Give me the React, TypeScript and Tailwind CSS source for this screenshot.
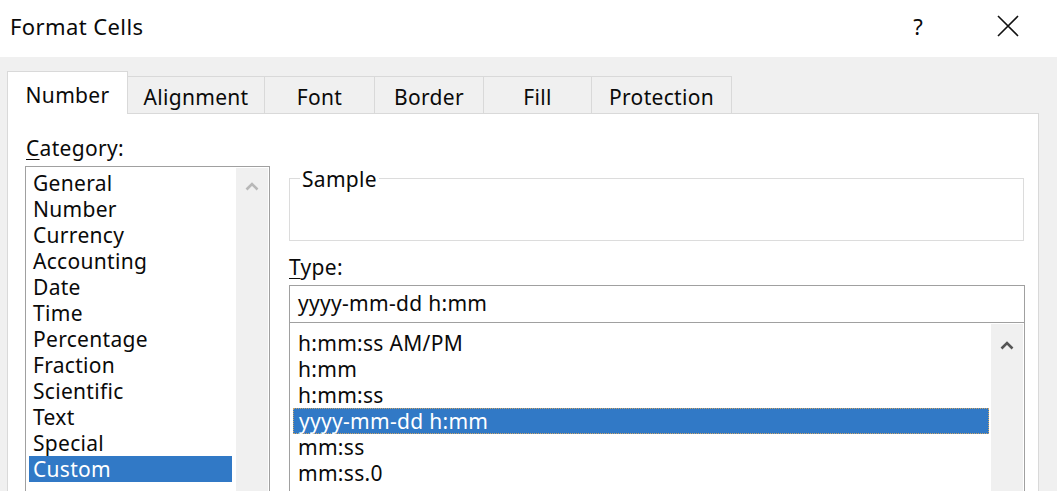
import React from 'react';

const categories = [
  'General',
  'Number',
  'Currency',
  'Accounting',
  'Date',
  'Time',
  'Percentage',
  'Fraction',
  'Scientific',
  'Text',
  'Special',
  'Custom',
];

const types = ['h:mm:ss AM/PM', 'h:mm', 'h:mm:ss', 'yyyy-mm-dd h:mm', 'mm:ss', 'mm:ss.0'];

const tabs = [
  { label: 'Number', w: 'w-[121px]' },
  { label: 'Alignment', w: 'w-[137px]' },
  { label: 'Font', w: 'w-[110px]' },
  { label: 'Border', w: 'w-[109px]' },
  { label: 'Fill', w: 'w-[108px]' },
  { label: 'Protection', w: 'w-[140px]' },
];

function Chevron({ className }: { className: string }) {
  return (
    <svg width="14" height="9" viewBox="0 0 14 9" className={className}>
      <path d="M1.5 7.5 L7 2 L12.5 7.5" fill="none" stroke="currentColor" strokeWidth="2.6" />
    </svg>
  );
}

export default function App() {
  return (
    <div className="w-[1057px] h-[491px] overflow-hidden bg-[#f0f0f0] text-[#0a0a0a] font-['Noto_Sans',sans-serif] text-[21px] tracking-[0.3px] leading-none">
      {/* Title bar */}
      <div className="h-[57px] bg-white flex items-center pl-[10px]">
        <span className="text-[22px] tracking-[0.4px] pb-[6px]">Format Cells</span>
        <div className="ml-auto flex items-center pb-[6px]">
          <span className="text-[22px] mr-[74px]">?</span>
          <svg width="22" height="22" viewBox="0 0 22 22" className="mr-[38px]">
            <path d="M1 1 L21 21 M21 1 L1 21" stroke="#111" strokeWidth="1.6" />
          </svg>
        </div>
      </div>

      {/* Tabs */}
      <div className="h-[56px] pl-[7px] flex items-end">
        {tabs.map((t, i) =>
          i === 0 ? (
            <div
              key={t.label}
              className={`${t.w} h-[43px] mb-[-1px] relative z-10 bg-white border border-[#d9d9d9] border-b-0 flex items-center justify-center pt-[4px]`}
            >
              {t.label}
            </div>
          ) : (
            <div
              key={t.label}
              className={`${t.w} h-[37px] bg-[#f0f0f0] border-t border-r border-[#d9d9d9] flex items-center justify-center pt-[4px]`}
            >
              {t.label}
            </div>
          )
        )}
      </div>

      {/* Panel */}
      <div className="ml-[7px] w-[1032px] h-[380px] bg-white border border-[#d9d9d9] flex">
        {/* Category column */}
        <div className="pl-[17px] pt-[24px] w-[262px] flex flex-col shrink-0">
          <div className="h-[28px] pl-[1px] shrink-0">
            <span className="underline underline-offset-[3px] decoration-1">C</span>ategory:
          </div>
          <div className="w-[245px] h-[340px] shrink-0 border border-[#a0a0a0] flex">
            <div className="flex-1 pt-[3px] pl-[3px]">
              {categories.map((c) => (
                <div
                  key={c}
                  className={`h-[26px] flex items-center pl-[4px] ${
                    c === 'Custom' ? 'bg-[#3179c6] text-white w-[203px]' : ''
                  }`}
                >
                  {c}
                </div>
              ))}
            </div>
            <div className="w-[32px] bg-[#f0f0f0] mr-[1px] my-[1px] flex justify-center pt-[14px]">
              <Chevron className="text-[#b8b8b8]" />
            </div>
          </div>
        </div>

        {/* Right column */}
        <div className="pl-[19px] pt-[64px] w-[755px] flex flex-col shrink-0">
          <div className="relative w-[735px] h-[63px] shrink-0 border border-[#dcdcdc]">
            <span className="absolute left-[10px] top-[-10px] bg-white px-[2px]">Sample</span>
          </div>
          <div className="h-[44px] pt-[16px] shrink-0">
            <span className="underline underline-offset-[3px] decoration-1">T</span>ype:
          </div>
          <div className="w-[736px] h-[38px] shrink-0 border border-[#a0a0a0] flex items-center pl-[8px] pb-[1px]">
            yyyy-mm-dd h:mm
          </div>
          <div className="w-[736px] h-[200px] shrink-0 border border-t-0 border-[#a0a0a0] flex">
            <div className="flex-1 pt-[7px] pl-[3px]">
              {types.map((t) => (
                <div
                  key={t}
                  className={`h-[26px] flex items-center pl-[5px] ${
                    t === 'yyyy-mm-dd h:mm'
                      ? 'bg-[#3179c6] text-white border border-dotted border-[#c9a46a] mr-[2px] pl-[4px]'
                      : ''
                  }`}
                >
                  {t}
                </div>
              ))}
            </div>
            <div className="w-[32px] bg-[#f0f0f0] mr-[1px] mt-[1px] flex justify-center pt-[17px]">
              <Chevron className="text-[#555]" />
            </div>
          </div>
        </div>
      </div>
    </div>
  );
}
